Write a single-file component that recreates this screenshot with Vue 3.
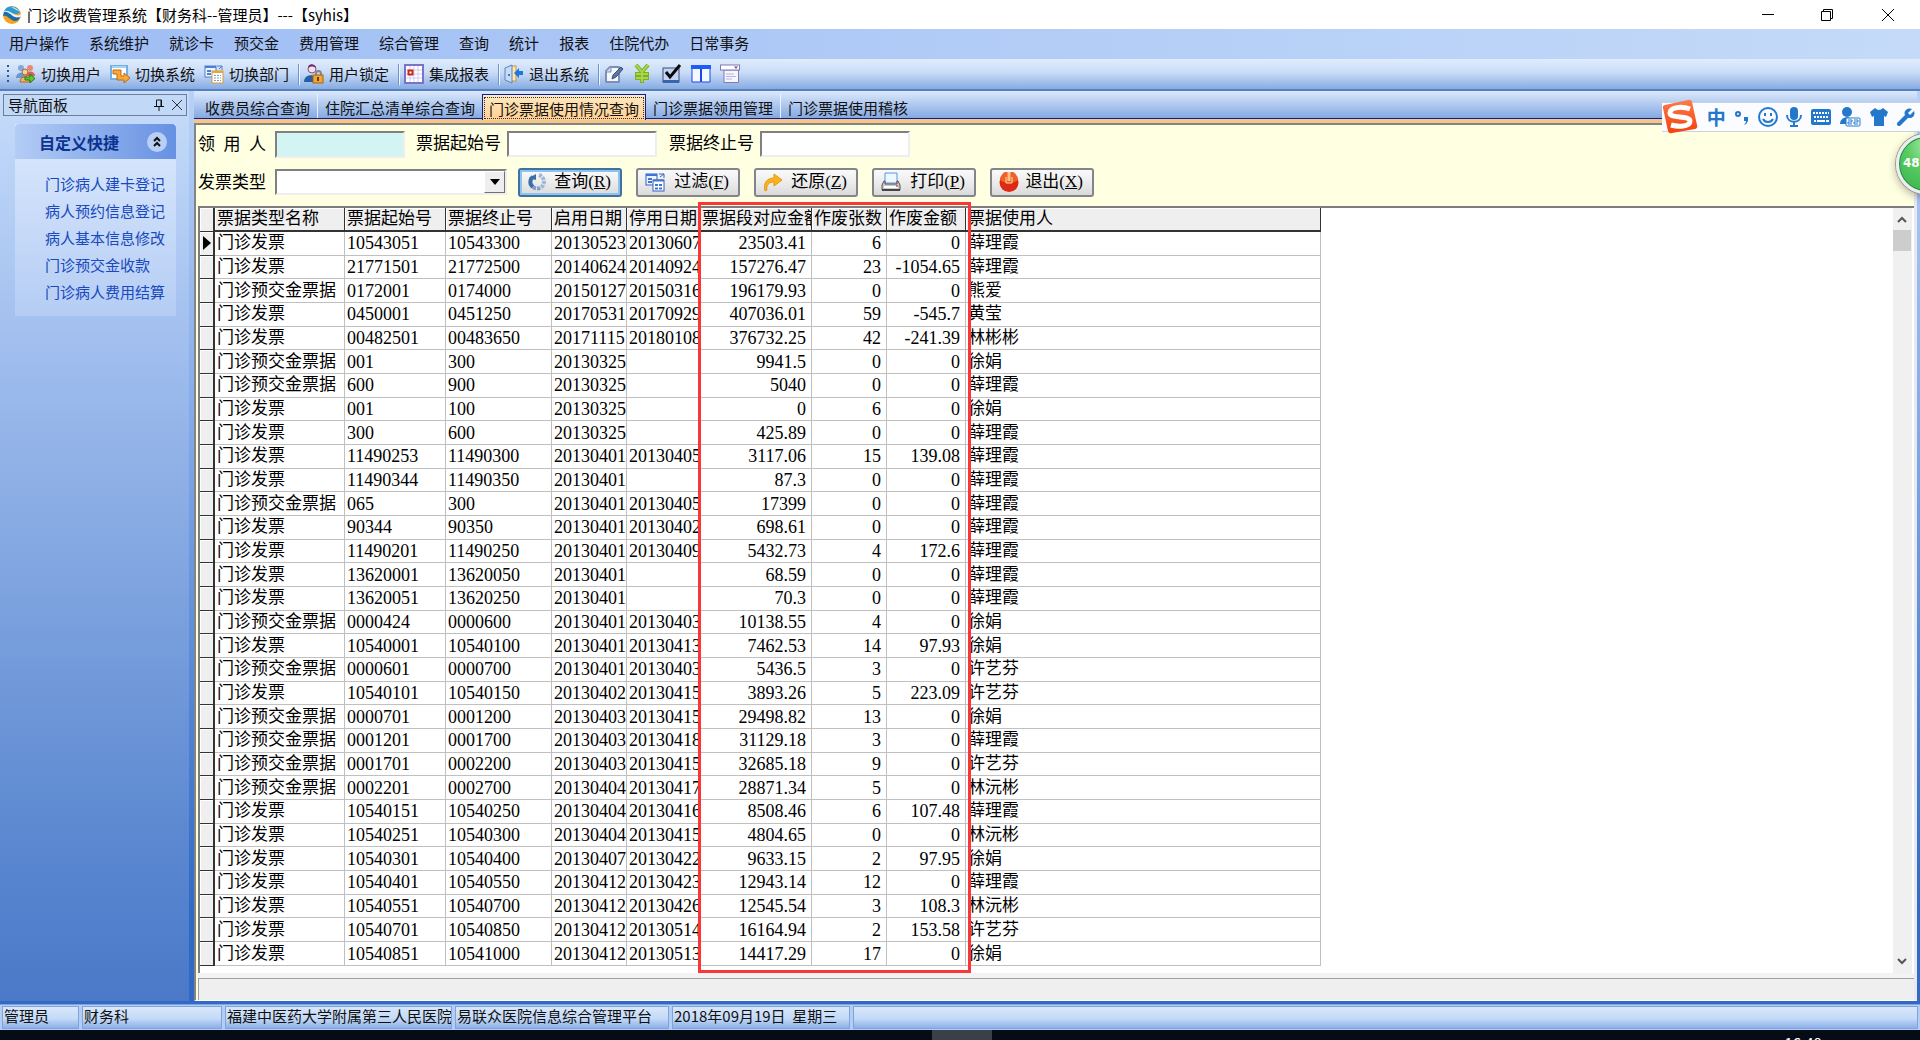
<script setup>
import { ref } from 'vue'

const menus = ['用户操作', '系统维护', '就诊卡', '预交金', '费用管理', '综合管理', '查询', '统计', '报表', '住院代办', '日常事务']
const shortcuts = ['门诊病人建卡登记', '病人预约信息登记', '病人基本信息修改', '门诊预交金收款', '门诊病人费用结算']
const tabs = ['收费员综合查询', '住院汇总清单综合查询', '门诊票据使用情况查询', '门诊票据领用管理', '门诊票据使用稽核']
const activeTab = ref(2)
const receiver = ref('')
const startNo = ref('')
const endNo = ref('')
const kind = ref('')

const columns = [
  { title: '票据类型名称', cls: 'w-kind' },
  { title: '票据起始号', cls: 'w-start' },
  { title: '票据终止号', cls: 'w-end' },
  { title: '启用日期', cls: 'w-date' },
  { title: '停用日期', cls: 'w-stop' },
  { title: '票据段对应金额', cls: 'w-sum' },
  { title: '作废张数', cls: 'w-count' },
  { title: '作废金额', cls: 'w-void' },
  { title: '票据使用人', cls: 'w-user' }
]

const A = '门诊发票'
const B = '门诊预交金票据'
const X = '薛理霞'
const J = '徐娟'
const rows = [
  [A, '10543051', '10543300', '20130523', '20130607', '23503.41', '6', '0', X],
  [A, '21771501', '21772500', '20140624', '20140924', '157276.47', '23', '-1054.65', X],
  [B, '0172001', '0174000', '20150127', '20150316', '196179.93', '0', '0', '熊爱'],
  [A, '0450001', '0451250', '20170531', '20170929', '407036.01', '59', '-545.7', '黄莹'],
  [A, '00482501', '00483650', '20171115', '20180108', '376732.25', '42', '-241.39', '林彬彬'],
  [B, '001', '300', '20130325', '', '9941.5', '0', '0', J],
  [B, '600', '900', '20130325', '', '5040', '0', '0', X],
  [A, '001', '100', '20130325', '', '0', '6', '0', J],
  [A, '300', '600', '20130325', '', '425.89', '0', '0', X],
  [A, '11490253', '11490300', '20130401', '20130405', '3117.06', '15', '139.08', X],
  [A, '11490344', '11490350', '20130401', '', '87.3', '0', '0', X],
  [B, '065', '300', '20130401', '20130405', '17399', '0', '0', X],
  [A, '90344', '90350', '20130401', '20130402', '698.61', '0', '0', X],
  [A, '11490201', '11490250', '20130401', '20130409', '5432.73', '4', '172.6', X],
  [A, '13620001', '13620050', '20130401', '', '68.59', '0', '0', X],
  [A, '13620051', '13620250', '20130401', '', '70.3', '0', '0', X],
  [B, '0000424', '0000600', '20130401', '20130403', '10138.55', '4', '0', J],
  [A, '10540001', '10540100', '20130401', '20130413', '7462.53', '14', '97.93', J],
  [B, '0000601', '0000700', '20130401', '20130403', '5436.5', '3', '0', '许艺芬'],
  [A, '10540101', '10540150', '20130402', '20130415', '3893.26', '5', '223.09', '许艺芬'],
  [B, '0000701', '0001200', '20130403', '20130415', '29498.82', '13', '0', J],
  [B, '0001201', '0001700', '20130403', '20130418', '31129.18', '3', '0', X],
  [B, '0001701', '0002200', '20130403', '20130415', '32685.18', '9', '0', '许艺芬'],
  [B, '0002201', '0002700', '20130404', '20130417', '28871.34', '5', '0', '林沅彬'],
  [A, '10540151', '10540250', '20130404', '20130416', '8508.46', '6', '107.48', X],
  [A, '10540251', '10540300', '20130404', '20130415', '4804.65', '0', '0', '林沅彬'],
  [A, '10540301', '10540400', '20130407', '20130422', '9633.15', '2', '97.95', J],
  [A, '10540401', '10540550', '20130412', '20130423', '12943.14', '12', '0', X],
  [A, '10540551', '10540700', '20130412', '20130426', '12545.54', '3', '108.3', '林沅彬'],
  [A, '10540701', '10540850', '20130412', '20130514', '16164.94', '2', '153.58', '许艺芬'],
  [A, '10540851', '10541000', '20130412', '20130513', '14417.29', '17', '0', J]
]

const cellClass = (i) => {
  if (i === 0 || i === 8) return 'txt'
  return i > 4 ? 'num right' : 'num'
}
</script>

<template>
  <div class="app">
    <header class="titlebar">
      <svg class="logo" viewBox="0 0 18 18">
        <circle cx="9" cy="9" r="9" fill="#f6a21c" />
        <path d="M1 5A9 9 0 0 1 17 6C15 9 12 8 9 7C6 6 3 7 1 5Z" fill="#2b9bd8" />
        <path d="M1 5C6 4 9 8 13 9C15 10 17 9 18 8V9C17 13 14 14 11 13C7 11 6 8 0 8Z" fill="#e9f6fc" />
        <path d="M1 6C6 5 8 10 12 11C14 12 16 11 17 11C16 15 12 16 9 14C5 12 4 9 0 10Z" fill="#1b6bb0" />
        <path d="M8 1C12 1 15 3 17 6C14 4 11 3 8 1Z" fill="#bfe3f5" />
      </svg>
      <h1>门诊收费管理系统【财务科--管理员】---【syhis】</h1>
      <div class="winctl">
        <button type="button" aria-label="最小化"><svg viewBox="0 0 12 12"><path d="M0 5.5H12" /></svg></button>
        <button type="button" aria-label="还原窗口"><svg viewBox="0 0 12 12"><path d="M.5 2.500H9.500V11.500H.5ZM2.500 2.500V.5H11.500V9.500H9.500" /></svg></button>
        <button type="button" aria-label="关闭窗口"><svg viewBox="0 0 12 12"><path d="M0 0L12 12M12 0L0 12" /></svg></button>
      </div>
    </header>

    <nav class="menubar">
      <button v-for="m in menus" :key="m" type="button">{{ m }}</button>
    </nav>

    <div class="toolbar">
      <span class="grip"></span>
      <button type="button">
        <svg viewBox="0 0 20 20">
          <circle cx="5" cy="4" r="3" fill="#7fa9dc" /><path d="M0 14C0 7 10 7 10 14Z" fill="#6d97cf" />
          <circle cx="14" cy="4" r="3" fill="#e58a76" /><path d="M10 12C10 6 19 6 19 12Z" fill="#d9604e" />
          <circle cx="9" cy="8" r="3" fill="#f3cf9c" stroke="#a86a2c" /><path d="M4 18C4 11 14 11 14 18Z" fill="#f0b75f" stroke="#a86a2c" />
          <path d="M9 13H14V10L19 14.500L14 19V16H9Z" fill="#5cc531" stroke="#2d7416" />
        </svg>切换用户
      </button>
      <button type="button">
        <svg viewBox="0 0 20 20">
          <rect x="1" y="2" width="16" height="13" fill="#fdfeff" stroke="#6fb0e6" stroke-width="2" /><path d="M2 3H16" stroke="#a9d3f4" stroke-width="2" />
          <path d="M3 6H11V12H14V9L20 14L14 19V16H7V10H3Z" fill="#f8a93a" stroke="#c06a12" />
        </svg>切换系统
      </button>
      <button type="button">
        <svg viewBox="0 0 20 20">
          <rect x="1" y="2" width="11" height="11" fill="#eef4ff" stroke="#4d7ed0" /><path d="M1 3H12M3 7H7M3 10H7" stroke="#4d7ed0" stroke-width="2" />
          <path d="M13 2H18V6M18 2L15 5" fill="none" stroke="#4d7ed0" />
          <rect x="8" y="7" width="11" height="12" fill="#fff" stroke="#d79b3d" /><path d="M8 8H19" stroke="#eaa53b" stroke-width="2" />
          <path d="M10 11.500H17M10 14H17M10 16.500H17" stroke="#7ba0c0" stroke-dasharray="2 1" />
        </svg>切换部门
      </button>
      <i class="sep"></i>
      <button type="button">
        <svg viewBox="0 0 20 20">
          <circle cx="8" cy="5" r="4" fill="#f3dfe8" stroke="#8a4a86" /><path d="M4 4C4-1 11-1 12 4C9 2 7 2 4 4Z" fill="#6b2c6e" />
          <path d="M0 18C0 9 13 9 13 18Z" fill="#255da6" />
          <path d="M12 12V10C12 6 17 6 17 10V12" fill="none" stroke="#86868c" stroke-width="2" /><rect x="9" y="11" width="10" height="8" fill="#f0a732" stroke="#a8650f" /><path d="M14 13V17" stroke="#6b3e06" stroke-width="2" />
        </svg>用户锁定
      </button>
      <i class="sep"></i>
      <button type="button">
        <svg viewBox="0 0 20 20">
          <rect x="1" y="1" width="18" height="18" fill="#fff" stroke="#7a72cc" stroke-width="2" />
          <path d="M6 2V18M10 2V18M14 2V18M2 6H18M2 10H18M2 14H18" stroke="#cfccf0" /><rect x="4.500" y="6.500" width="4" height="4" fill="#fff" stroke="#c8281c" stroke-width="2" />
        </svg>集成报表
      </button>
      <i class="sep"></i>
      <button type="button">
        <svg viewBox="0 0 20 20">
          <rect x="6" y="2" width="6" height="15" fill="#ffe6b0" stroke="#c79546" /><path d="M1 4L8 1V19L1 16Z" fill="#c4dcf6" stroke="#5b87ba" />
          <circle cx="5" cy="11" r="1" fill="#2c5382" /><path d="M19 7V11H15V14L10 9L15 4V7Z" fill="#1e78d8" />
        </svg>退出系统
      </button>
      <i class="sep"></i>
      <button type="button" class="icon" aria-label="编辑">
        <svg viewBox="0 0 20 20"><path d="M6 3H15V18H2V7Z" fill="#f4f7fd" stroke="#7e8fb6" stroke-width="2" stroke-linejoin="round" /><path d="M2 8H7V3" fill="#cdd8ec" stroke="#7e8fb6" /><path d="M8 15L9 11L17 3L19 5L12 13Z" fill="#5d76a3" stroke="#3c5078" /></svg>
      </button>
      <button type="button" class="icon" aria-label="收费">
        <svg viewBox="0 0 20 20"><path d="M3 1L9 8L15 1M9 8V19M2 10H16M2 14H16" fill="none" stroke="#7fae2a" stroke-width="4" /><path d="M3 1L9 8L15 1M9 8V18M3 10H15M3 14H15" fill="none" stroke="#a8d645" stroke-width="2" /></svg>
      </button>
      <button type="button" class="icon" aria-label="核对">
        <svg viewBox="0 0 20 20"><rect x="1" y="4" width="16" height="14" fill="#c4d4f3" stroke="#3d4f78" /><path d="M1 17.500H17" stroke="#3a64ac" stroke-width="3" /><path d="M4 8L8 13L18 1" fill="none" stroke="#0a0a0a" stroke-width="3" /></svg>
      </button>
      <button type="button" class="icon" aria-label="双栏">
        <svg viewBox="0 0 20 20"><path d="M1 2.500H9.500V18H1ZM10.500 2.500H19V18H10.500Z" fill="#f4f8ff" stroke="#1c45ee" /><path d="M0 3H20" stroke="#1c5cf8" stroke-width="4" /></svg>
      </button>
      <button type="button" class="icon" aria-label="窗口">
        <svg viewBox="0 0 20 20"><path d="M4 6H18.500V18.500H4Z" fill="#f6f6ff" stroke="#8079b4" /><rect x=".5" y="1" width="19" height="5" fill="#fff" stroke="#8079b4" /><path d="M14 2.500H18L16 5Z" fill="#615a98" /><path d="M6 10H14M6 12.500H16M6 15H12" stroke="#b6b2dc" /></svg>
      </button>
    </div>

    <main class="body">
      <aside class="side">
        <div class="side-head">
          <span>导航面板</span>
          <button type="button" aria-label="固定"><svg viewBox="0 0 12 12"><path d="M3.500 1H8.500V7.500M3.500 1V7.500M1 7.500H11M6 7V12M8 1V7" fill="none" stroke="#111" /></svg></button>
          <button type="button" aria-label="关闭面板"><svg viewBox="0 0 12 12"><path d="M1 1L11 11M11 1L1 11" stroke="#333" /></svg></button>
        </div>
        <section class="group">
          <h2>
            <span>自定义快捷</span>
            <button type="button" aria-label="收起"><svg viewBox="0 0 10 12"><path d="M2 5L5 2L8 5M2 10L5 7L8 10" fill="none" stroke="#111" stroke-width="2" /></svg></button>
          </h2>
          <ul>
            <li v-for="s in shortcuts" :key="s"><a href="#">{{ s }}</a></li>
          </ul>
        </section>
      </aside>

      <section class="work">
        <div class="tabs">
          <button v-for="(t, i) in tabs" :key="t" type="button" :class="{ on: i === activeTab, line: i === 0 || i === 3 }" @click="activeTab = i"><span>{{ t }}</span></button>
        </div>
        <div class="page">
          <form class="form" @submit.prevent>
            <div class="line1">
              <label for="receiver" class="lead">领&nbsp;&nbsp;用&nbsp;&nbsp;人</label>
              <input id="receiver" v-model="receiver" class="short" type="text" />
              <label for="start">票据起始号</label>
              <input id="start" v-model="startNo" type="text" />
              <label for="end">票据终止号</label>
              <input id="end" v-model="endNo" type="text" />
            </div>
            <div class="line2">
              <label for="kind" class="lead">发票类型</label>
              <div class="combo">
                <select id="kind" v-model="kind"><option value=""></option><option>门诊发票</option><option>门诊预交金票据</option></select>
                <span class="drop"><svg viewBox="0 0 10 6"><path d="M0 0H10L5 6Z" /></svg></span>
              </div>
              <div class="actions">
                <button type="submit" class="primary">
                  <svg viewBox="0 0 20 20"><path d="M12 3A7 7 0 0 1 13 16" fill="none" stroke="#9fb6d8" stroke-width="4" stroke-dasharray="3 1" /><path d="M13 16A7 7 0 0 1 5 14" fill="none" stroke="#7e9cca" stroke-width="4" stroke-dasharray="3 1" /><path d="M6 15C2 12 3 7 6 5" fill="none" stroke="#3b6fa8" stroke-width="4" /><path d="M2 6L9 2V8Z" fill="#3b6fa8" /></svg>
                  <span>查询(<u>R</u>)</span>
                </button>
                <button type="button">
                  <svg viewBox="0 0 20 20"><rect x="1" y="2" width="11" height="11" fill="#eef4ff" stroke="#3560c0" /><path d="M1 3H12M3 7H7M3 10H7" stroke="#3f74d6" stroke-width="2" /><path d="M14 2H19V6M19 2L15 5" fill="none" stroke="#3560c0" /><rect x="8" y="8" width="11" height="11" fill="#fff" stroke="#3560c0" /><path d="M8 8.500H19" stroke="#3f74d6" stroke-width="2" /><path d="M10 13H17M10 16.500H17" stroke="#3f74d6" stroke-width="2" stroke-dasharray="3 1" /></svg>
                  <span>过滤(<u>F</u>)</span>
                </button>
                <button type="button">
                  <svg viewBox="0 0 20 20"><path d="M2 19C0 11 4 6 11 6V2L19 8L11 14V10C6 10 3 13 4 18Z" fill="#f9b21e" stroke="#e79a10" /></svg>
                  <span>还原(<u>Z</u>)</span>
                </button>
                <button type="button">
                  <svg viewBox="0 0 20 20"><path d="M4 1H16V11H4Z" fill="#eef6ff" stroke="#5b93e8" /><path d="M3 9L1 13V18H19V13L17 9H16V12H4V9Z" fill="#c9c9cb" stroke="#555" /><path d="M3 15H17" stroke="#fff" stroke-width="2" /><path d="M1 18H19" stroke="#444" stroke-width="2" /><circle cx="16" cy="14" r="1" fill="#e05030" /></svg>
                  <span>打印(<u>P</u>)</span>
                </button>
                <button type="button">
                  <svg viewBox="0 0 20 20"><circle cx="10" cy="10.500" r="9.500" fill="#de2a14" /><path d="M1 8A9 9 0 0 1 19 8C14 12 6 12 1 8Z" fill="#f0602a" /><path d="M7 5V11H13V5" fill="none" stroke="#ffd9a0" stroke-width="1" /><path d="M10 0V9" stroke="#f9c58c" stroke-width="3" /></svg>
                  <span>退出(<u>X</u>)</span>
                </button>
              </div>
            </div>
          </form>

          <div class="gridbox">
            <div class="tablewrap">
              <table>
                <colgroup>
                  <col class="w-mark" />
                  <col v-for="c in columns" :key="c.title" :class="c.cls" />
                </colgroup>
                <thead>
                  <tr><th class="mark"></th><th v-for="c in columns" :key="c.title" scope="col">{{ c.title }}</th></tr>
                </thead>
                <tbody>
                  <tr v-for="(r, n) in rows" :key="n">
                    <td class="mark"><svg v-if="n === 0" viewBox="0 0 8 14"><path d="M0 0L8 7L0 14Z" /></svg></td>
                    <td v-for="(v, i) in r" :key="i" :class="cellClass(i)">{{ v }}</td>
                  </tr>
                </tbody>
              </table>
              <div class="highlight"></div>
            </div>
            <div class="scroll">
              <svg viewBox="0 0 10 7"><path d="M1 6L5 2L9 6" /></svg>
              <span class="thumb"></span>
              <svg class="down" viewBox="0 0 10 7"><path d="M1 1L5 5L9 1" /></svg>
            </div>
          </div>
          <div class="footstrip"></div>
        </div>
      </section>
    </main>

    <footer class="status">
      <span class="s1">管理员</span>
      <span class="s2">财务科</span>
      <span class="s3">福建中医药大学附属第三人民医院</span>
      <span class="s4">易联众医院信息综合管理平台</span>
      <span class="s5">2018年09月19日&nbsp; 星期三</span>
      <span class="s6"></span>
    </footer>
    <div class="taskbar"><span class="task"></span><time>16:49</time></div>

    <div class="ime">
      <svg class="sogou" viewBox="0 0 36 36">
        <defs><linearGradient id="sg" x1="0" y1="0" x2="0" y2="1"><stop offset="0" stop-color="#ff7a4a" /><stop offset="1" stop-color="#f0420c" /></linearGradient></defs>
        <path d="M3 6L26 1Q29 0 30 3L35 26Q36 29 33 30L10 34Q7 35 6 32L1 9Q0 7 3 6Z" fill="url(#sg)" />
        <path d="M28 10C20 7 8 8 8 14C8 20 28 16 28 22C28 28 16 28 9 26" fill="none" stroke="#fff" stroke-width="5" />
      </svg>
      <b>中</b>
      <svg class="punc" viewBox="0 0 14 16"><circle cx="3" cy="5" r="2" fill="none" stroke="#2378cb" stroke-width="2" /><path d="M9 8H13V12Q12 15 9 16Q11 14 11 12H9Z" fill="#2378cb" /></svg>
      <svg class="smile" viewBox="0 0 20 20" fill="none" stroke="#2378cb" stroke-width="2"><circle cx="10" cy="10" r="9" /><path d="M7 6V9M13 6V9M5 12C7 16 13 16 15 12" /></svg>
      <svg class="mic" viewBox="0 0 16 20"><rect x="4" y="0" width="8" height="13" rx="4" fill="#2378cb" /><path d="M1 8C1 17 15 17 15 8M8 15V19M4 19H12" fill="none" stroke="#2378cb" stroke-width="2" /></svg>
      <svg class="kbd" viewBox="0 0 20 16"><rect width="20" height="16" rx="2" fill="#2378cb" /><path d="M2 4H18M3 8H18" stroke="#fff" stroke-width="2" stroke-dasharray="2 1" /><path d="M3 12H5M6 12H14M15 12H18" stroke="#fff" stroke-width="2" /></svg>
      <svg class="person" viewBox="0 0 21 20"><circle cx="7" cy="5" r="5" fill="#2378cb" /><path d="M0 17C0 8 14 8 14 17Z" fill="#2378cb" /><rect x="6" y="11" width="14" height="8" rx="1" fill="#fff" stroke="#2378cb" /><path d="M8 13H12V15H8V17H12M14 13H18V15H14V17H18" fill="none" stroke="#2378cb" /></svg>
      <svg class="shirt" viewBox="0 0 18 18"><path d="M5 0Q9 4 13 0L18 4L16 9L14 8V18H4V8L2 9L0 4Z" fill="#2378cb" /></svg>
      <svg class="wrench" viewBox="0 0 18 18"><path d="M2 16L10 8" stroke="#2378cb" stroke-width="4" stroke-linecap="round" /><path d="M15 1L11 5L13 7L17 3C19 8 14 12 10 9L8 7C6 3 11-1 15 1Z" fill="#2378cb" /></svg>
    </div>
    <div class="ball">48</div>
  </div>
</template>

<style>
body { margin: 0; }
</style>

<style scoped>
.app {
  --song: "Liberation Serif", "Noto Sans CJK SC", serif;
  position: relative;
  display: flex;
  flex-direction: column;
  height: 100vh;
  overflow: hidden;
  font: 15px/20px "Noto Sans CJK SC", sans-serif;
  color: #111;
  background: #316ac5;
}
* { box-sizing: border-box; }
button { font: inherit; color: inherit; background: none; border: 0; padding: 0; margin: 0; white-space: nowrap; }
h1, h2, ul { margin: 0; padding: 0; list-style: none; font: inherit; }

.titlebar { flex: none; display: flex; align-items: center; height: 29px; padding-left: 3px; gap: 6px; background: #fff; color: #000; }
.logo { width: 18px; height: 18px; }
.winctl { margin-left: auto; display: flex; }
.winctl button { width: 59px; height: 28px; display: flex; align-items: center; justify-content: center; }
.winctl button:last-child { width: 64px; }
.winctl svg { width: 12px; height: 12px; fill: none; stroke: #000; }

.menubar { flex: none; display: flex; gap: 20px; height: 30px; padding: 0 0 2px 9px; background: linear-gradient(90deg, #9ebdf5, #c4daf8); }

.toolbar { flex: none; display: flex; align-items: center; height: 32px; padding-left: 7px; border-bottom: 2px solid #5580bf; background: linear-gradient(#dfecfd, #c9dcf7 45%, #86abe2); }
.toolbar button { display: flex; align-items: center; gap: 5px; margin-right: 9px; }
.toolbar svg { width: 20px; height: 20px; }
.toolbar .icon { width: 20px; }
.grip { width: 2px; height: 18px; margin-right: 7px; background: repeating-linear-gradient(#33559c 0 2px, transparent 2px 5px); }
.sep { width: 2px; height: 21px; margin-right: 4px; border-left: 1px solid #6e94d0; border-right: 1px solid #f1f6fe; }

.body { flex: 1; min-height: 0; display: flex; padding-bottom: 3px; }
.side { flex: none; width: 194px; padding: 3px 2px 0 3px; border-right: 5px solid #316ac5; border-image: linear-gradient(#b8d1f7, #7ea5e6 40%, #316ac5 90%) 0 5 0 0; background: linear-gradient(#c6dcfa, #a3c0ef 26%, #5b88d0 82%, #4b79c8); }
.side-head { display: flex; align-items: center; height: 22px; padding: 0 0 0 4px; border: 1px solid #6e7f9c; background: #c2d8f7; }
.side-head span { flex: 1; }
.side-head button { width: 18px; display: flex; justify-content: center; }
.side-head svg { width: 12px; height: 12px; }
.group { margin: 8px 11px 0 12px; background: linear-gradient(#dbe9fd, #b5cdf4); }
.group h2 { display: flex; align-items: center; height: 35px; padding: 0 9px 0 24px; border-radius: 4px 4px 0 0; color: #0a3390; font-weight: 700; background: linear-gradient(90deg, #b4cdf6, #6690e2); }
.group h2 span { flex: 1; font-size: 16px; }
.group h2 button { width: 20px; height: 20px; border-radius: 10px; background: #b9cff5; display: flex; align-items: center; justify-content: center; }
.group h2 svg { width: 10px; height: 12px; }
.group ul { padding: 11px 0 11px 30px; }
.group li { height: 27px; line-height: 28px; }
.group a { color: #1849bd; text-decoration: none; }

.work { flex: 1; min-width: 0; display: flex; flex-direction: column; padding-right: 3px; background: linear-gradient(#b8d1f7, #7ea5e6 40%, #316ac5 90%); }
.tabs { flex: none; display: flex; align-items: stretch; height: 32px; padding: 3px 0 0 4px; border-bottom: 4px solid #f6c588; background: linear-gradient(transparent 27px, #0a1e96 27px), linear-gradient(#dce9fc, #84a9e2 27px); }
.tabs button { padding: 0 7px; height: 24px; line-height: 28px; }
.tabs .line { border-right: 1px solid #eaf2fd; }
.tabs .on { height: 26px; padding: 1px; border: 1px solid #0a1e96; border-bottom: 0; background: linear-gradient(#ffe9bf, #ffd092); }
.tabs .on span { display: block; height: 22px; line-height: 22px; padding: 0 4px; border: 1px dotted #333; }

.page { flex: 1; min-height: 0; display: flex; flex-direction: column; border: solid #848484; border-width: 2px 0 1px 2px; border-right: 3px solid #e6eaf0; border-bottom-color: #fff; background: #ffffe1; font: 17px/24px var(--song); color: #000; }
.form { flex: none; padding: 5px 0 9px 2px; }
.line1, .line2 { display: flex; align-items: center; }
.line1 { height: 28px; }
.line2 { height: 30px; margin-top: 9px; }
.lead { width: 77px; padding-top: 2px; }
input { width: 150px; height: 26px; margin: 0 12px 0 6px; border: 2px solid; border-color: #808080 #eee #eee #808080; background: #fff; font: inherit; outline: none; }
input.short { width: 130px; height: 27px; margin: 0 11px 0 0; background: #d2f4f2; }
.combo { display: flex; width: 232px; height: 26px; border: 2px solid; border-color: #808080 #eee #eee #808080; background: #fff; }
.combo select { flex: 1; min-width: 0; appearance: none; border: 0; background: #fff; font: inherit; outline: none; }
.drop { width: 21px; border: 1px solid; border-color: #fff #707070 #707070 #fff; background: #eee; display: flex; align-items: center; justify-content: center; pointer-events: none; }
.drop svg { width: 10px; height: 6px; }
.actions { display: flex; gap: 14px; margin-left: 11px; }
.actions button { display: flex; align-items: center; justify-content: space-between; width: 104px; height: 29px; padding: 0 9px 0 7px; border: 2px solid #82858a; border-radius: 3px; background: linear-gradient(#fafafa, #ececec 50%, #dadada); }
.actions button.primary { border-color: #41719f; box-shadow: inset 0 0 0 2px #8cc4f0; }
.actions svg { width: 20px; height: 20px; }

.gridbox { flex: 1; min-height: 0; display: flex; margin-left: 2px; border: solid #7d7d7d; border-width: 2px 0 0 2px; background: #fff; }
.tablewrap { position: relative; flex: 1; min-width: 0; padding-bottom: 7px; }
table { table-layout: fixed; width: 1121px; height: 100%; border-collapse: separate; border-spacing: 0; }
th, td { padding: 0 0 0 2px; height: 20px; line-height: 20px; overflow: hidden; white-space: nowrap; text-align: left; font-weight: 400; border: solid #c0c0c0; border-width: 0 1px 1px 0; }
th { height: 24px; background: #efefef; border-color: #333; border-width: 0 1px 2px 0; box-shadow: inset 1px 1px #fff; }
.mark { padding: 0; background: #efefef; border: solid #333; border-width: 0 2px 1px 0; box-shadow: inset 1px 1px #fff; text-align: center; }
.mark svg { width: 8px; height: 14px; display: block; margin: auto; }
.num { font-size: 18px; }
.right { padding: 0 5px 0 0; text-align: right; }
.w-mark { width: 15px; }
.w-kind { width: 130px; }
.w-start { width: 101px; }
.w-end { width: 106px; }
.w-date { width: 75px; }
.w-stop { width: 73px; }
.w-sum { width: 112px; }
.w-count { width: 75px; }
.w-void { width: 79px; }
.w-user { width: 355px; }
.highlight { position: absolute; left: 498px; top: -6px; bottom: 0; width: 273px; border: 3px solid #fb3636; pointer-events: none; }
.scroll { flex: none; width: 21px; display: flex; flex-direction: column; align-items: center; padding: 8px 1px 8px 0; background: #f0f0f0; border-right: 2px solid #fff; }
.scroll svg { width: 10px; height: 7px; fill: none; stroke: #555; stroke-width: 2; }
.scroll .down { margin-top: auto; }
.thumb { width: 18px; height: 21px; margin-top: 7px; background: #cdcdcd; }
.footstrip { flex: none; height: 27px; margin-left: 2px; border-top: 5px solid #f3f3f3; background: #efefef; box-shadow: inset 1px 1px #a0a0a0; }

.status { flex: none; display: flex; gap: 3px; height: 26px; padding: 1px 2px; background: #b4cdf4; border-top: 1px solid #7fa3dd; line-height: 18px; white-space: nowrap; }
.status span { overflow: hidden; padding-left: 1px; border: 1px solid #7fa3dc; background: linear-gradient(#d9e7fb, #c4daf7 55%, #8db0e8); }
.s1 { width: 77px; }
.s2 { width: 140px; }
.s3 { width: 227px; }
.s4 { width: 214px; }
.s5 { width: 178px; }
.s6 { flex: 1; }

.taskbar { flex: none; display: flex; justify-content: space-between; height: 10px; overflow: hidden; padding: 0 98px 0 932px; background: #060c15; color: #fff; }
.task { width: 60px; background: #3a4048; }
.taskbar time { padding-top: 3px; }

.ime { position: absolute; right: 0; top: 102px; height: 30px; width: 258px; display: flex; align-items: center; justify-content: space-between; padding-right: 5px; background: #fafcff; border: solid #c5d3e2; border-width: 1px 0; }
.ime b { font-size: 19px; color: #2378cb; }
.sogou { width: 36px; height: 36px; flex: none; }
.punc { width: 14px; height: 16px; }
.smile { width: 20px; height: 20px; }
.mic { width: 16px; height: 20px; }
.kbd { width: 20px; height: 16px; }
.person { width: 21px; height: 20px; }
.shirt { width: 18px; height: 18px; }
.wrench { width: 18px; height: 18px; }
.ball { position: absolute; right: -36px; top: 134px; width: 60px; height: 60px; padding-left: 4px; border: 3px solid #eee; border-radius: 30px; background: radial-gradient(circle at 60% 15%, #b5efb5, #56cb62 45%, #38b04a); box-shadow: 0 0 0 1px #9a9a9a, inset 0 0 0 1px #1f8a4c, 0 3px 10px #0005; color: #fff; font: 700 12px/52px "DejaVu Sans", sans-serif; }
</style>
